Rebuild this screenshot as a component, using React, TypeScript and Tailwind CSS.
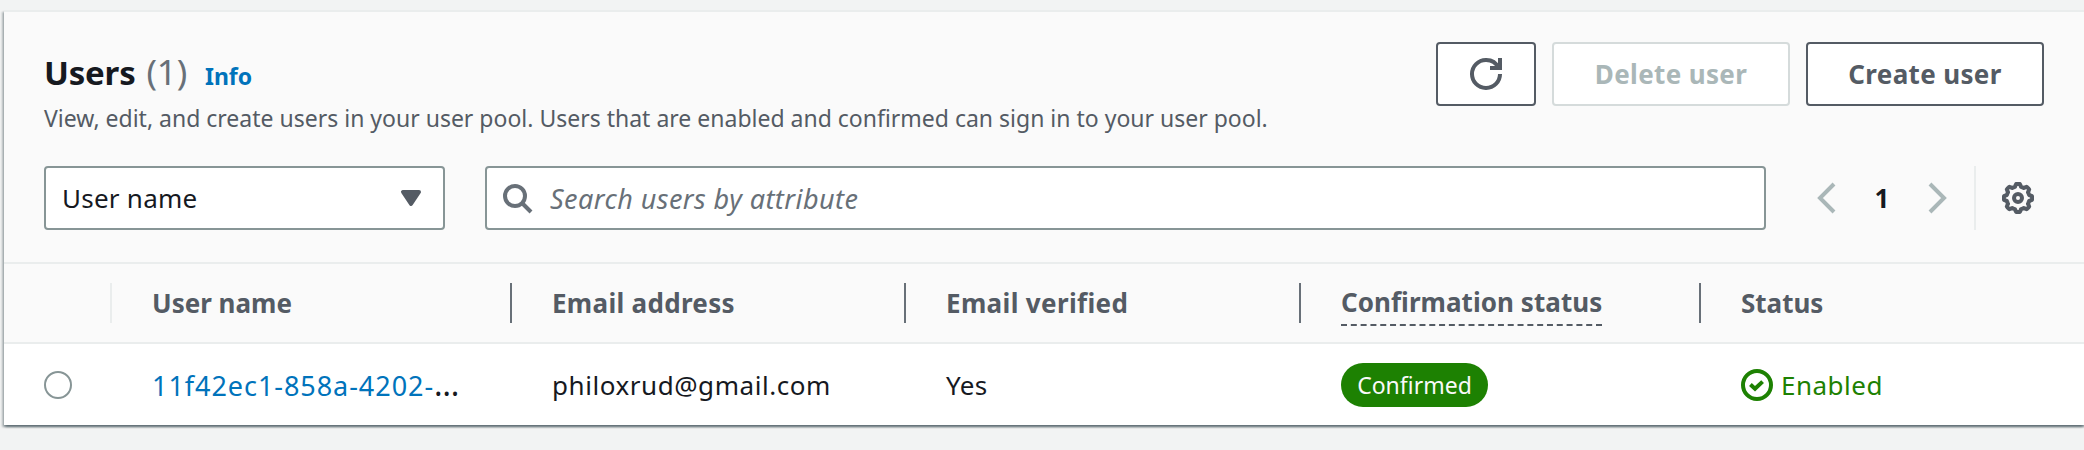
import type { ReactNode } from "react";

function Icon({ className = "", children }: { className?: string; children: ReactNode }) {
  return (
    <svg viewBox="0 0 16 16" fill="none" stroke="currentColor" strokeWidth="2" className={`size-8 shrink-0 ${className}`}>
      {children}
    </svg>
  );
}

// Eight-toothed wheel: the outline alternates between tooth tips and valleys.
const gearPath = (() => {
  const steps = 96;
  const points: string[] = [];
  for (let i = 0; i < steps; i++) {
    const a = (i / steps) * Math.PI * 2 - Math.PI / 2;
    const wave = Math.max(-1, Math.min(1, Math.cos(8 * a) * 2));
    const r = 6.4 + wave * 0.65;
    points.push(`${(8 + r * Math.cos(a)).toFixed(2)} ${(8 + r * Math.sin(a)).toFixed(2)}`);
  }
  return `M${points.join("L")}Z`;
})();

function HeaderCell({ width, last, children }: { width: string; last?: boolean; children: ReactNode }) {
  return (
    <div className={`flex h-10 items-center pl-10 ${width} ${last ? "" : "border-r-2 border-[#687078]"}`}>{children}</div>
  );
}

export default function App() {
  return (
    <div className="h-[450px] w-full overflow-hidden bg-[#f2f3f3] pt-[10px] pl-1 font-['Noto_Sans',sans-serif] text-[26px] leading-9 text-[#16191f]">
      <section className="h-[415px] border-t-2 border-[#eaeded] bg-white shadow-[0_2px_2px_0_rgba(0,28,36,0.3),2px_2px_2px_0_rgba(0,28,36,0.25),-2px_2px_2px_0_rgba(0,28,36,0.25)]">
        <div className="h-[252px] border-b-2 border-[#eaeded] bg-[#fafafa] px-10 pt-[30px]">
          <div className="flex h-[124px] items-start justify-between">
            <div>
              <div className="flex h-[60px] items-baseline">
                <h1 className="text-[33px] leading-[60px] font-bold tracking-[-0.2px]">Users</h1>
                <span className="ml-[11px] text-[35px] leading-[60px] tracking-[-0.2px] text-[#687078]">(1)</span>
                <a className="ml-[18px] text-[23px] leading-[60px] font-bold text-[#0073bb]">Info</a>
              </div>
              <p className="mt-[1px] text-[23px] leading-[30px] text-[#545b64]">
                View, edit, and create users in your user pool. Users that are enabled and confirmed can sign in to your user pool.
              </p>
            </div>
            <div className="flex gap-4 font-bold tracking-[0.35px] text-[#545b64]">
              <button className="flex h-16 w-[100px] items-center justify-center rounded-[4px] border-2 border-[#545b64] bg-white">
                <Icon>
                  <path d="M10 5h5V0" />
                  <path d="M15 8a6.957 6.957 0 0 1-7 7 6.957 6.957 0 0 1-7-7 6.957 6.957 0 0 1 7-7 6.87 6.87 0 0 1 6.3 4" />
                </Icon>
              </button>
              <button className="h-16 w-[238px] rounded-[4px] border-2 border-[#d5dbdb] bg-white text-[#aab7b8]">Delete user</button>
              <button className="h-16 w-[238px] rounded-[4px] border-2 border-[#545b64] bg-white">Create user</button>
            </div>
          </div>
          <div className="flex h-16">
            <div className="flex w-[401px] items-center justify-between rounded-[4px] border-2 border-[#879596] bg-white pr-4 pl-4">
              <span className="tracking-[0.25px]">User name</span>
              <Icon className="text-[#545b64]">
                <path d="M4 5h8l-4 6-4-6z" fill="currentColor" strokeLinejoin="round" />
              </Icon>
            </div>
            <div className="ml-10 flex w-[1281px] items-center rounded-[4px] border-2 border-[#879596] bg-white pl-[14px] text-[#687078]">
              <Icon>
                <circle cx="7" cy="7" r="5" />
                <path d="m15 15-4.5-4.5" />
              </Icon>
              <span className="ml-[17px] pt-px text-[27px] tracking-[0.45px] italic">Search users by attribute</span>
            </div>
            <div className="ml-[44px] flex items-center text-[#aab7b8]">
              <Icon>
                <path d="M12 1 5 8l7 7" />
              </Icon>
              <span className="w-20 text-center font-bold text-[#16191f]">1</span>
              <Icon>
                <path d="m4 1 7 7-7 7" />
              </Icon>
            </div>
            <div className="ml-5 flex items-center border-l-2 border-[#eaeded] pl-[26px] text-[#545b64]">
              <Icon>
                <path d={gearPath} strokeLinejoin="round" />
                <circle cx="8" cy="8" r="2" />
              </Icon>
            </div>
          </div>
        </div>
        <div className="flex h-20 items-center border-b-2 border-[#eaeded] bg-[#fafafa] font-bold text-[#545b64]">
          <div className="h-10 w-[108px] border-r-2 border-[#eaeded]" />
          <HeaderCell width="w-[400px]">User name</HeaderCell>
          <HeaderCell width="w-[394px]">
            <span className="tracking-[0.3px]">Email address</span>
          </HeaderCell>
          <HeaderCell width="w-[395px]">
            <span className="tracking-[0.35px]">Email verified</span>
          </HeaderCell>
          <HeaderCell width="w-[400px]">
            <span className="mt-[3px] h-[43px] border-b-2 border-dashed border-[#545b64] leading-[38px] tracking-[0.05px]">Confirmation status</span>
          </HeaderCell>
          <HeaderCell width="w-[380px]" last>
            Status
          </HeaderCell>
        </div>
        <div className="flex h-[82px] items-center">
          <div className="w-[108px] pl-10">
            <div className="size-7 rounded-full border-2 border-[#879596]" />
          </div>
          <div className="w-[400px] pl-10 whitespace-nowrap">
            <a className="text-[27px] tracking-[0.95px] text-[#0073bb]">11f42ec1-858a-4202-</a>
            <span className="text-[32px]">…</span>
          </div>
          <div className="w-[394px] pl-10 tracking-[0.55px]">philoxrud@gmail.com</div>
          <div className="w-[395px] pl-10 tracking-[0.3px]">Yes</div>
          <div className="w-[400px] pl-10">
            <span className="flex h-11 w-[147px] items-center justify-center rounded-full bg-[#1d8102] text-[23px] text-[#fafafa]">Confirmed</span>
          </div>
          <div className="flex items-center gap-2 pl-10 text-[#1d8102]">
            <Icon>
              <circle cx="8" cy="8" r="7" />
              <path d="m4.7 7.8 2.3 2.1 3.8-3.6" />
            </Icon>
            <span className="tracking-[0.5px]">Enabled</span>
          </div>
        </div>
      </section>
    </div>
  );
}
